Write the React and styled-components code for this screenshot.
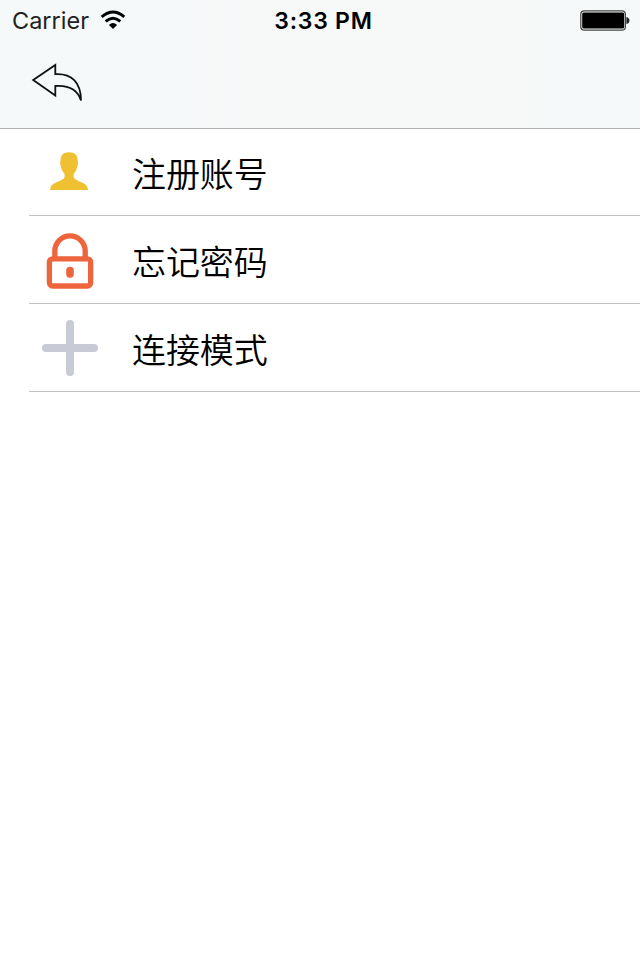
import React from "react";
import styled, { createGlobalStyle } from "styled-components";

const GlobalStyle = createGlobalStyle`
  *{
    margin:0;
    padding:0;
    box-sizing:border-box;
  }
  body{
    background-color: #fff;
    font-family: Inter, "Noto Sans CJK SC", sans-serif;
    color: #000;
  }
  svg{
    display: block;
  }
`;

const Screen = styled.div`
  width: 100%;
  min-height: 100vh;
  background-color: #fff;
`;

const Header = styled.header`
  height: 128px;
  background: linear-gradient(90deg, #f5f9fa, #f7f8f8 50%, #f6f9f9);
  box-shadow: 0 1px 0 #b1b3b3;
`;

const StatusBar = styled.div`
  height: 40px;
  padding: 0 10px 0 12px;
  display: grid;
  grid-template-columns: 1fr auto 1fr;
  align-items: center;
`;

const Carrier = styled.div`
  display: flex;
  align-items: center;
  gap: 11px;
  font-size: 23.5px;
  line-height: 30px;
  color: #222;
`;

const CarrierName = styled.span`
  padding-top: 2px;
`;

const Time = styled.div`
  padding: 2px 0 0 5px;
  font-size: 23px;
  font-weight: 600;
  line-height: 30px;
  letter-spacing: 0.75px;
`;

const Battery = styled.div`
  justify-self: end;
`;

const NavBar = styled.nav`
  height: 88px;
  padding: 22px 0 0 31px;
`;

const BackButton = styled.button`
  border: none;
  background: none;
`;

const List = styled.ul`
  list-style: none;
`;

const Item = styled.li`
  height: 88px;
  margin-left: 29px;
  padding-left: 13px;
  display: flex;
  align-items: center;
  gap: 34px;
  border-bottom: 1px solid #c3c3c5;
`;

const Label = styled.span`
  padding-top: 3px;
  font-family: "Noto Sans CJK SC", sans-serif;
  font-size: 34px;
  font-weight: 350;
  line-height: 48px;
  letter-spacing: -0.1px;
`;

const WifiIcon = () => (
  <svg width="26" height="20" viewBox="0 0 26 20" fill="none" stroke="#000" strokeWidth="3">
    <path d="M1.7 6.9 Q13 -3 24.3 6.9" />
    <path d="M5.7 11.4 Q13 5.1 20.3 11.4" />
    <path d="M8.9 15 Q13 10.8 17.1 15 L13 19 Z" fill="#000" stroke="none" />
  </svg>
);

const BatteryIcon = () => (
  <svg width="50" height="21" viewBox="0 0 50 21">
    <rect x="0.8" y="0.8" width="44.6" height="19.4" rx="3.5" fill="#f7f9f9" stroke="#444" strokeWidth="1.2" />
    <rect x="2.2" y="2.6" width="42" height="15.8" rx="1.5" />
    <path d="M46.4 7 Q49.4 7.5 49.4 10.5 T46.4 14 Z" fill="#222" />
  </svg>
);

const BackIcon = () => (
  <svg width="54" height="42" viewBox="31 62 54 42" fill="none" stroke="#111" strokeWidth="1.8">
    <path d="M33.2 80.1 L55.3 65 V74.2 C71.5 73.2 81 82.5 81 100.5 C77.5 89.5 69 85 55.3 86 V95.5 Z" />
  </svg>
);

const UserIcon = () => (
  <svg width="56" height="56" viewBox="42 144 56 56" fill="#f0c033">
    <path d="M69 152.2 C74.8 152.2 77.6 155 77.6 160 C78.4 162 78 165.5 77 167.2 C76.6 170 75.2 172 73.6 174 V176.8 C74 179 76 180 79.5 181.4 C85.5 183.6 88 185.8 88 190 H50.2 C50.2 185.8 52.5 183.6 58.5 181.4 C62.2 180 64.2 179 64.6 176.8 V174 C63 172 61.6 170 61.2 167.2 C60.2 165.5 59.8 162 60.6 160 C60.6 155 63.2 152.2 69 152.2 Z" />
  </svg>
);

const LockIcon = () => (
  <svg width="56" height="60" viewBox="42 230 56 60" fill="none" stroke="#ee643d" strokeWidth="5.3">
    <rect x="49.4" y="258.8" width="41.2" height="27.2" rx="3.2" />
    <path d="M54.8 258 V251 A15.2 15.2 0 0 1 85.2 251 V258" />
    <rect x="66.2" y="266.8" width="7.6" height="11" rx="3.6" fill="#ee643d" stroke="none" />
  </svg>
);

const PlusIcon = () => (
  <svg width="56" height="56" viewBox="0 0 56 56" stroke="#c8cad6" strokeWidth="8" strokeLinecap="round">
    <path d="M28 4 V52 M4 28 H52" />
  </svg>
);

const items = [
  { label: "注册账号", Icon: UserIcon },
  { label: "忘记密码", Icon: LockIcon },
  { label: "连接模式", Icon: PlusIcon },
];

function App() {
  return (
    <Screen>
      <GlobalStyle />
      <Header>
        <StatusBar>
          <Carrier>
            <CarrierName>Carrier</CarrierName>
            <WifiIcon />
          </Carrier>
          <Time>3:33 PM</Time>
          <Battery>
            <BatteryIcon />
          </Battery>
        </StatusBar>
        <NavBar>
          <BackButton>
            <BackIcon />
          </BackButton>
        </NavBar>
      </Header>
      <List>
        {items.map(({ label, Icon }) => (
          <Item key={label}>
            <Icon />
            <Label>{label}</Label>
          </Item>
        ))}
      </List>
    </Screen>
  );
}

export default App;
